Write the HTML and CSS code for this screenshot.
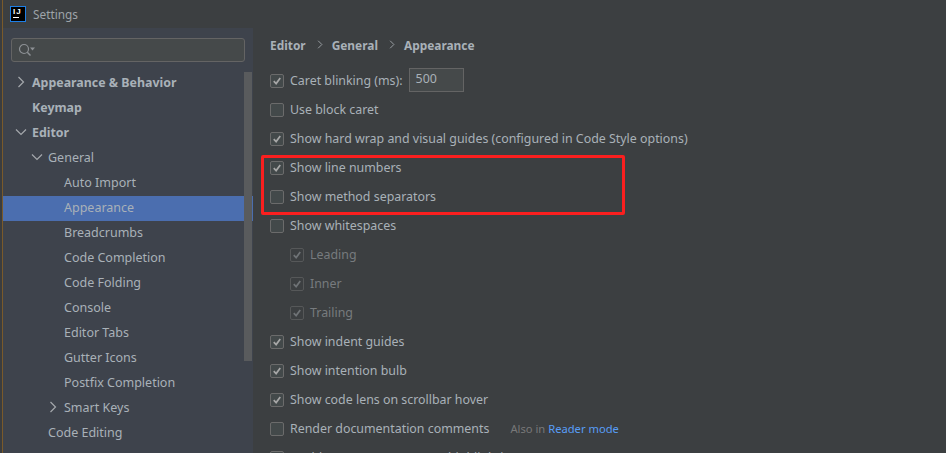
FILE: index.html
```html
<!DOCTYPE html>
<html lang="en">

<head>
    <meta charset="UTF-8">
    <meta name="viewport" content="width=device-width, initial-scale=1.0">
    <title>Settings</title>
    <link rel="stylesheet" href="styles.css">
</head>

<body>
    <svg class="defs" width="0" height="0">
        <symbol id="right" viewBox="0 0 8 12"><path d="M1.5 1 L6.5 6 L1.5 11" fill="none" stroke="#a4a8ac" stroke-width="1.2"/></symbol>
        <symbol id="down" viewBox="0 0 12 8"><path d="M1 1.5 L6 6.5 L11 1.5" fill="none" stroke="#a4a8ac" stroke-width="1.2"/></symbol>
        <symbol id="tick" viewBox="0 0 14 14"><path d="M3.2 7.2 L6 10 L10.8 3.6" fill="none" stroke="currentColor" stroke-width="2"/></symbol>
    </svg>

    <div class="strip"></div>
    <div class="window">
        <div class="titlebar">
            <div class="logo"><span class="logo-text">IJ</span><span class="logo-bar"></span></div>
            <span>Settings</span>
        </div>

        <div class="main">
            <div class="sidebar">
                <div class="search">
                    <svg class="search-icon" width="18" height="14" viewBox="0 0 18 14">
                        <circle cx="6" cy="6" r="4.5" fill="none" stroke="#8d9195" stroke-width="1.2"/>
                        <path d="M9.3 9.3 L12.5 12.5" stroke="#8d9195" stroke-width="1.4"/>
                        <path d="M12 4.5 H17 L14.5 7.5 Z" fill="#8d9195"/>
                    </svg>
                </div>
                <div class="tree">
                    <div class="node level0 bold"><svg class="arrow-right"><use href="#right"/></svg>Appearance &amp; Behavior</div>
                    <div class="node level0 bold">Keymap</div>
                    <div class="node level0 bold"><svg class="arrow-down"><use href="#down"/></svg>Editor</div>
                    <div class="node level1"><svg class="arrow-down"><use href="#down"/></svg>General</div>
                    <div class="node level2">Auto Import</div>
                    <div class="node level2 selected">Appearance</div>
                    <div class="node level2">Breadcrumbs</div>
                    <div class="node level2">Code Completion</div>
                    <div class="node level2">Code Folding</div>
                    <div class="node level2">Console</div>
                    <div class="node level2">Editor Tabs</div>
                    <div class="node level2">Gutter Icons</div>
                    <div class="node level2">Postfix Completion</div>
                    <div class="node level2"><svg class="arrow-right"><use href="#right"/></svg>Smart Keys</div>
                    <div class="node level1">Code Editing</div>
                </div>
                <div class="scrollbar"></div>
            </div>

            <div class="content">
                <div class="crumbs">
                    <span>Editor</span><svg class="crumb-sep"><use href="#right"/></svg>
                    <span>General</span><svg class="crumb-sep"><use href="#right"/></svg>
                    <span>Appearance</span>
                </div>

                <div class="option">
                    <span class="box"><svg><use href="#tick"/></svg></span>Caret blinking (ms):
                    <span class="num-input">500</span>
                </div>
                <div class="option"><span class="box"></span>Use block caret</div>
                <div class="option"><span class="box"><svg><use href="#tick"/></svg></span>Show hard wrap and visual guides (configured in Code Style options)</div>
                <div class="option"><span class="box"><svg><use href="#tick"/></svg></span>Show line numbers</div>
                <div class="option"><span class="box"></span>Show method separators</div>
                <div class="option"><span class="box"></span>Show whitespaces</div>
                <div class="option sub"><span class="box"><svg><use href="#tick"/></svg></span>Leading</div>
                <div class="option sub"><span class="box"><svg><use href="#tick"/></svg></span>Inner</div>
                <div class="option sub"><span class="box"><svg><use href="#tick"/></svg></span>Trailing</div>
                <div class="option"><span class="box"><svg><use href="#tick"/></svg></span>Show indent guides</div>
                <div class="option"><span class="box"><svg><use href="#tick"/></svg></span>Show intention bulb</div>
                <div class="option"><span class="box"><svg><use href="#tick"/></svg></span>Show code lens on scrollbar hover</div>
                <div class="option"><span class="box"></span>Render documentation comments
                    <span class="hint">Also in <span class="link">Reader mode</span></span>
                </div>
                <div class="option"><span class="box"></span>Enable HTML/XML tag tree highlighting</div>

                <div class="highlight"></div>
            </div>
        </div>
    </div>
</body>

</html>
```

FILE: styles.css
```css
* {
    margin: 0;
    padding: 0;
    box-sizing: border-box;
}

html,
body {
    height: 100%;
    overflow: hidden;
}

body {
    display: flex;
    font-family: "Noto Sans", "Open Sans", sans-serif;
    font-size: 12.5px;
    color: #a9b1b8;
    background: #3c3f41;
}

.defs {
    position: absolute;
}

.strip {
    width: 3px;
    flex: none;
    background: linear-gradient(to right, #3b3d3f 2px, #7a5a2a 2px);
}

.window {
    flex: 1;
    display: flex;
    flex-direction: column;
    min-width: 0;
}

.titlebar {
    height: 28px;
    flex: none;
    display: flex;
    align-items: center;
    gap: 7px;
    padding-left: 7px;
    background: #3c3f41;
    color: #9ea4a9;
    font-size: 11.8px;
}

.logo {
    width: 16px;
    height: 16px;
    background: #000;
    border: 1px solid #1e7fe6;
    color: #fff;
}

.logo-text {
    display: block;
    font-family: "Liberation Sans", sans-serif;
    font-size: 8px;
    font-weight: 700;
    line-height: 9px;
    padding-left: 2px;
    letter-spacing: 1px;
}

.logo-bar {
    display: block;
    width: 6px;
    height: 1px;
    margin: 1px 0 0 2px;
    background: #fff;
}

.main {
    flex: 1;
    display: flex;
    min-height: 0;
}

.sidebar {
    width: 250px;
    flex: none;
    position: relative;
    padding-top: 10px;
    background: #3e434c;
}

.search {
    height: 24px;
    margin: 0 8px;
    display: flex;
    align-items: center;
    padding-left: 6px;
    background: #45494a;
    border: 1px solid #646464;
    border-radius: 3px;
}

.tree {
    margin-top: 9px;
}

.node {
    height: 25px;
    display: flex;
    align-items: center;
    position: relative;
    white-space: nowrap;
    padding-bottom: 3px;
}

.level0 {
    padding-left: 29px;
}

.level1 {
    padding-left: 45px;
}

.level2 {
    padding-left: 61px;
}

.bold {
    font-weight: 700;
    font-size: 12.4px;
}

.selected {
    background: #4b6eaf;
}

.arrow-right,
.arrow-down {
    position: absolute;
}

.arrow-right {
    width: 8px;
    height: 12px;
    margin-left: -15px;
}

.arrow-down {
    width: 12px;
    height: 8px;
    margin-left: -17px;
}

.scrollbar {
    position: absolute;
    top: 44px;
    left: 241px;
    width: 8px;
    height: 289px;
    background: #595b5d;
}

.content {
    flex: 1;
    position: relative;
    padding: 5px 0 0 17px;
    background: #3c3f41;
    min-width: 0;
}

.crumbs {
    height: 23px;
    display: flex;
    align-items: center;
    font-weight: 700;
    font-size: 11.9px;
    margin-bottom: 10px;
}

.crumb-sep {
    width: 6px;
    height: 9px;
    margin: 0 9px 0 11px;
}

.option {
    height: 29px;
    display: flex;
    align-items: center;
    white-space: nowrap;
    font-size: 12.4px;
}

.box {
    width: 14px;
    height: 14px;
    flex: none;
    margin-right: 6px;
    border: 1px solid #6b6b6b;
    border-radius: 2px;
    background: #43494a;
    color: #a7a7a7;
    display: flex;
    align-items: center;
    justify-content: center;
}

.box svg {
    width: 12px;
    height: 12px;
}

.sub {
    padding-left: 20px;
    color: #777b7e;
}

.sub .box {
    color: #6f7376;
    background: #3c3f41;
    border-color: #565859;
}

.num-input {
    width: 55px;
    height: 24px;
    margin: 0 0 2px 6px;
    padding-left: 6px;
    padding-bottom: 2px;
    display: flex;
    align-items: center;
    background: #45494a;
    border: 1px solid #646464;
}

.hint {
    margin-left: 21px;
    font-size: 11.2px;
    color: #787878;
}

.link {
    color: #589df6;
}

.highlight {
    position: absolute;
    left: 8px;
    top: 127px;
    width: 364px;
    height: 60px;
    border: 3px solid #fb1f1f;
    border-radius: 2px;
}
```
